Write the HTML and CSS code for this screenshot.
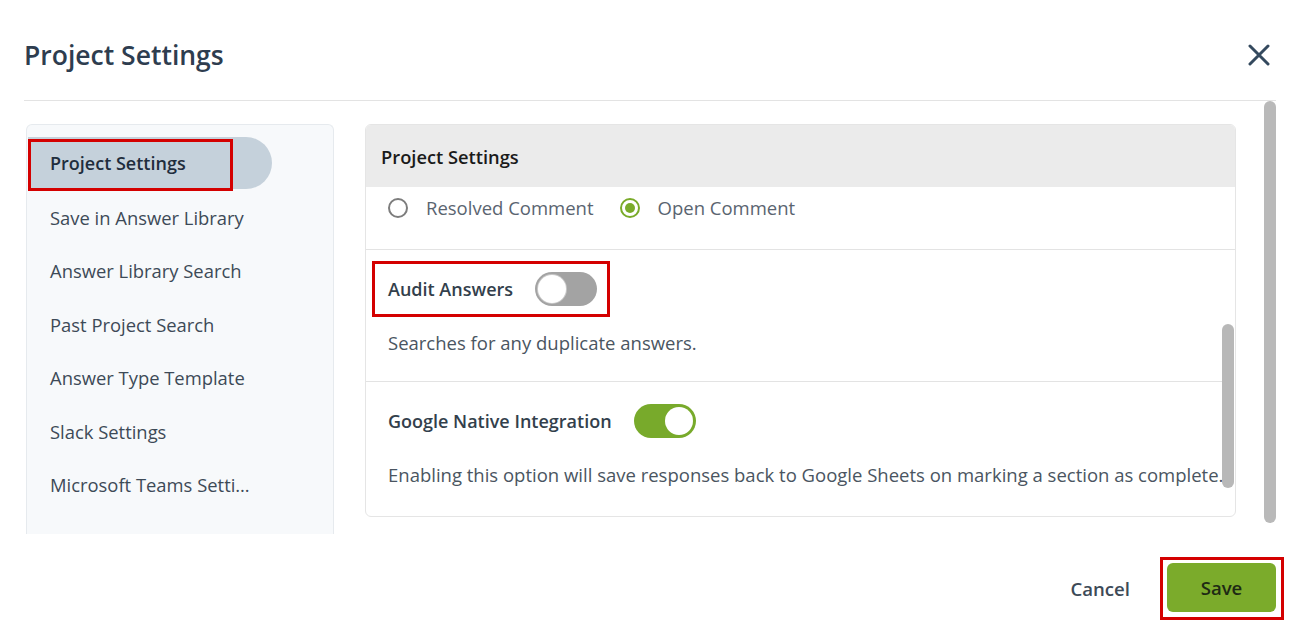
FILE: index.html
```html
<!DOCTYPE html>
<html>
<head>
<meta charset="utf-8">
<link rel="stylesheet" href="styles.css">
</head>
<body>
<div class="modal">
  <header class="head">
    <h1 class="title">Project Settings</h1>
    <button class="close" aria-label="Close">
      <svg width="22" height="22" viewBox="0 0 22 22"><path d="M2 2 L20 20 M20 2 L2 20" stroke="#34495e" stroke-width="3" stroke-linecap="round" fill="none"/></svg>
    </button>
  </header>
  <div class="body">
    <nav class="side">
      <div class="item active">Project Settings<span class="mark"></span></div>
      <div class="item">Save in Answer Library</div>
      <div class="item">Answer Library Search</div>
      <div class="item">Past Project Search</div>
      <div class="item">Answer Type Template</div>
      <div class="item">Slack Settings</div>
      <div class="item">Microsoft Teams Setti…</div>
    </nav>
    <section class="card">
      <div class="card-head">Project Settings</div>
      <div class="sec radios">
        <label class="radio"><span class="dot"></span>Resolved Comment</label>
        <label class="radio on"><span class="dot"></span>Open Comment</label>
      </div>
      <div class="sec">
        <div class="row marked">
          <span class="label">Audit Answers</span>
          <span class="toggle"></span>
        </div>
        <p class="desc">Searches for any duplicate answers.</p>
      </div>
      <div class="sec last">
        <div class="row">
          <span class="label">Google Native Integration</span>
          <span class="toggle on"></span>
        </div>
        <p class="desc">Enabling this option will save responses back to Google Sheets on marking a section as complete.</p>
      </div>
      <div class="inner-scroll"></div>
    </section>
    <div class="spacer"></div>
    <div class="scroll"></div>
  </div>
  <footer class="foot">
    <button class="cancel">Cancel</button>
    <div class="save-mark"><button class="save">Save</button></div>
  </footer>
</div>
</body>
</html>
```

FILE: styles.css
```css
* { box-sizing: border-box; }
html, body { margin: 0; padding: 0; background: #fff; }
body {
  font-family: "Open Sans", "Liberation Sans", sans-serif;
  color: #3d4a57;
  width: 1300px;
  height: 634px;
  overflow: hidden;
}
.modal { padding: 0 24px; }
.head {
  height: 101px;
  display: flex;
  align-items: center;
  justify-content: space-between;
  border-bottom: 1px solid #e3e3e3;
  padding-top: 10px;
}
.title {
  margin: 0;
  font-size: 26.5px;
  font-weight: 600;
  color: #2e3d4f;
  letter-spacing: 0;
}
.close {
  border: 0;
  background: none;
  padding: 0;
  margin-right: 6px;
  width: 22px;
  height: 22px;
  display: flex;
}
.body {
  display: flex;
  align-items: flex-start;
  height: 433px;
}
.side {
  margin: 23px 0 0 2px;
  width: 308px;
  height: 410px;
  background: #f7f9fb;
  border: 1px solid #e6eaee;
  border-bottom: none;
  border-radius: 6px 6px 0 0;
  padding-top: 12px;
}
.item {
  position: relative;
  height: 53.5px;
  display: flex;
  align-items: center;
  padding-left: 23px;
  font-size: 18.4px;
  color: #3d4a57;
}
.item.active {
  height: 52px;
  margin-bottom: 1.5px;
  margin-left: 1px;
  padding-left: 22px;
  width: 244px;
  background: #c5d1db;
  border-radius: 0 26px 26px 0;
  font-weight: 600;
  font-size: 18px;
  color: #1f2d3d;
}
.mark {
  position: absolute;
  left: 0;
  top: 2px;
  width: 205px;
  height: 52px;
  border: 3px solid #d40000;
}
.card {
  position: relative;
  margin: 23px 0 0 31px;
  width: 871px;
  height: 393px;
  border: 1px solid #e5e5e5;
  border-radius: 6px;
  overflow: hidden;
}
.card-head {
  height: 62px;
  background: #ebebeb;
  display: flex;
  align-items: center;
  padding-left: 15px;
  font-size: 18.3px;
  font-weight: 600;
  color: #1a1a1a;
}
.sec {
  padding: 22px 22px 26px;
  border-bottom: 1px solid #e3e3e3;
  margin-right: 12px;
}
.sec.last { border-bottom: none; }
.radios {
  display: flex;
  gap: 26px;
  padding: 9px 22px 29px;
  margin-right: 0;
}
.radio {
  display: flex;
  align-items: center;
  font-size: 18.5px;
  line-height: 24px;
  color: #5a6470;
}
.dot {
  width: 20px;
  height: 20px;
  border-radius: 50%;
  border: 2px solid #7d7d7d;
  margin-right: 18px;
  display: flex;
  align-items: center;
  justify-content: center;
}
.radio.on .dot { border-color: #7aab2a; }
.radio.on .dot::after {
  content: "";
  width: 10px;
  height: 10px;
  border-radius: 50%;
  background: #7aab2a;
}
.row {
  display: flex;
  align-items: center;
  height: 34px;
  gap: 22px;
}
.row.marked {
  display: inline-flex;
  height: 56px;
  margin: -11px 0 -11px -16px;
  padding: 0 10px 0 13px;
  border: 3px solid #d40000;
}
.label {
  font-size: 18px;
  font-weight: 600;
  color: #333f4c;
}
.toggle {
  position: relative;
  width: 62px;
  height: 34px;
  border-radius: 17px;
  background: #a3a3a3;
}
.toggle::after {
  content: "";
  position: absolute;
  top: 3px;
  left: 3px;
  width: 28px;
  height: 28px;
  border-radius: 50%;
  background: #fff;
  box-shadow: 0 0 0 1px #c8c8c8;
}
.toggle.on { background: #78aa2b; }
.toggle.on::after { left: auto; right: 3px; box-shadow: none; }
.desc {
  margin: 25px 0 0;
  font-size: 18.5px;
  line-height: 24px;
  color: #4a5561;
  white-space: nowrap;
}
.inner-scroll {
  position: absolute;
  right: 1px;
  top: 199px;
  width: 12px;
  height: 164px;
  border-radius: 6px;
  background: #b8b8b8;
}
.spacer { flex: 1; }
.scroll {
  width: 12px;
  height: 422px;
  border-radius: 6px;
  background: #b9b9b9;
}
.foot {
  display: flex;
  justify-content: flex-end;
  align-items: center;
  margin-top: 23px;
  margin-right: -8px;
}
.cancel {
  border: 0;
  background: none;
  font-family: inherit;
  font-size: 18.6px;
  font-weight: 600;
  color: #3d4a57;
  padding: 0;
  margin-right: 30px;
}
.save-mark {
  border: 3px solid #d40000;
  padding: 3px 5px 5px 4px;
}
.save {
  width: 109px;
  height: 49px;
  border: 0;
  border-radius: 6px;
  background: #7bab2b;
  font-family: inherit;
  font-size: 18.6px;
  font-weight: 600;
  color: #1e2a14;
}
```
